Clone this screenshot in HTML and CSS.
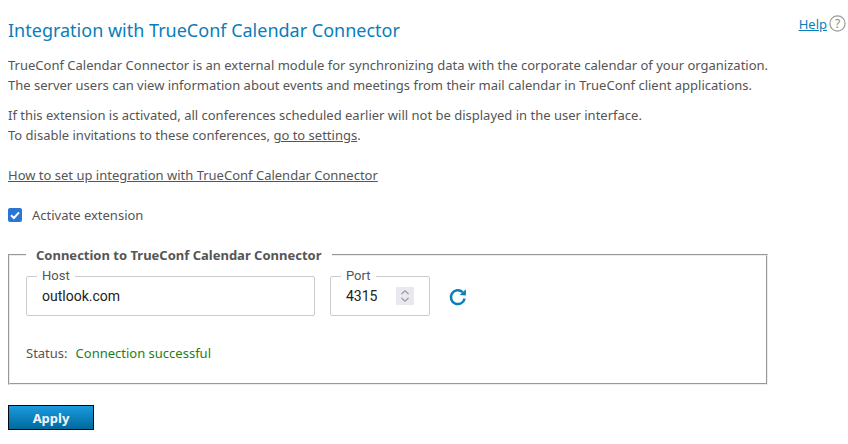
FILE: index.html
```
<!DOCTYPE html>
<html lang="en">
<head>
<meta charset="utf-8">
<title>Integration with TrueConf Calendar Connector</title>
<link rel="stylesheet" href="styles.css">
</head>
<body>
<div class="page">
  <div class="head">
    <h1>Integration with TrueConf Calendar Connector</h1>
    <div class="help"><a href="#">Help</a><svg class="help-icon" width="17" height="17" viewBox="0 0 17 17"><circle cx="8.5" cy="8.5" r="7.6" fill="none" stroke="#9a9a9a" stroke-width="1.2"/><text x="8.5" y="12.5" text-anchor="middle" class="help-q">?</text></svg></div>
  </div>
  <p class="para">TrueConf Calendar Connector is an external module for synchronizing data with the corporate calendar of your organization.<br>The server users can view information about events and meetings from their mail calendar in TrueConf client applications.</p>
  <p class="para second">If this extension is activated, all conferences scheduled earlier will not be displayed in the user interface.<br>To disable invitations to these conferences, <a href="#">go to settings</a>.</p>
  <p class="para howto"><a href="#">How to set up integration with TrueConf Calendar Connector</a></p>
  <label class="check"><span class="box"><svg width="14" height="14" viewBox="0 0 14 14"><path d="M3 7.2 L5.9 10 L11 4.3" fill="none" stroke="#fff" stroke-width="2"/></svg></span>Activate extension</label>
  <fieldset class="conn">
    <legend>Connection to TrueConf Calendar Connector</legend>
    <div class="fields">
      <div class="field host"><span class="flabel">Host</span><span class="val">outlook.com</span></div>
      <div class="field port"><span class="flabel">Port</span><span class="val">4315</span>
        <span class="spin"><svg width="18" height="18" viewBox="0 0 18 18"><path d="M5.5 7 L9 3.8 L12.5 7 M5.5 11 L9 14.2 L12.5 11" fill="none" stroke="#9a9aa2" stroke-width="1.2"/></svg></span>
      </div>
      <svg class="refresh" width="20" height="20" viewBox="0 0 20 20"><path d="M16.6 11.5 A6.9 6.9 0 1 1 14.6 5.2" fill="none" stroke="#0a7dbb" stroke-width="2.5"/><path d="M11.6 7.9 L17.9 8.4 L17.9 2.2 Z" fill="#0a7dbb"/></svg>
    </div>
    <div class="status"><span class="slabel">Status:</span><span class="ok">Connection successful</span></div>
  </fieldset>
  <button class="apply" type="button">Apply</button>
</div>
</body>
</html>
```
FILE: styles.css
```
* { box-sizing: border-box; }
html, body { margin: 0; padding: 0; background: #fff; }
body { width: 848px; height: 444px; overflow: hidden; font-family: "Noto Sans", sans-serif; font-size: 13px; color: #555; }
.page { padding: 19px 8px 0; }
.head { display: flex; justify-content: space-between; align-items: flex-start; }
h1 { margin: 0; font-size: 18px; line-height: 22px; font-weight: 400; color: #0a7dbb; }
.help { display: flex; align-items: center; gap: 2px; margin: -4px -6px 0 0; font-size: 13px; line-height: 16px; }
.help a { color: #0a7dbb; }
.help-q { font-size: 12px; fill: #8a8a8a; font-family: "Noto Sans", sans-serif; }
.para { margin: 14px 0 0; line-height: 20px; }
.para a { color: #555; }
.second { margin-top: 10px; }
.howto { margin-top: 20px; }
.check { display: flex; align-items: center; gap: 10px; margin-top: 20px; line-height: 20px; }
.box { width: 14px; height: 14px; border-radius: 2px; background: #2a76d2; display: block; }
.box svg { display: block; }
.conn { margin: 21px 0 0; width: 760px; height: 139px; padding: 10px 16px 0 16px; border: 2px groove #ececec; }
.conn legend { padding: 0 10px; margin-left: 0; font-weight: 700; line-height: 18px; }
.fields { display: flex; align-items: center; gap: 15px; margin-top: 2px; }
.field { position: relative; height: 40px; border: 1px solid #ccc; border-radius: 2px; display: flex; align-items: center; padding: 0 15px; font-family: Roboto, sans-serif; font-size: 14px; color: #222; }
.host { width: 289px; }
.port { width: 100px; justify-content: space-between; padding-right: 15px; }
.flabel { position: absolute; top: -8px; left: 10px; padding: 0 5px; background: #fff; line-height: 14px; font-size: 13px; color: #555; }
.val { padding-top: 0; }
.spin { width: 18px; height: 18px; background: #e8e8ee; display: block; }
.spin svg { display: block; }
.refresh { display: block; margin: 2px 0 0 3px; }
.status { display: flex; gap: 8px; margin-top: 27px; padding-left: 0; line-height: 20px; }
.ok { color: #1a7f1a; }
.apply { display: block; width: 86px; height: 25px; margin-top: 20px; padding: 0; border: 1px solid #050a10; background: linear-gradient(#1a9ade, #006a9e); color: #eef6fb; font-family: "Noto Sans", sans-serif; font-size: 13px; font-weight: 700; }
```
